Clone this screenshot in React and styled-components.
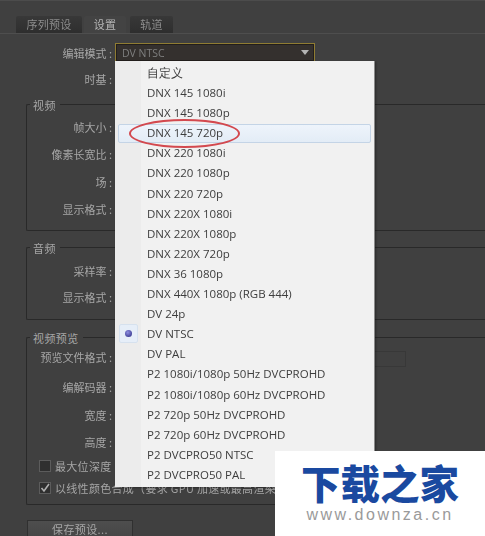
import React from 'react'
import styled, { createGlobalStyle } from 'styled-components'

const GlobalStyle = createGlobalStyle`
  html, body { margin: 0; padding: 0; background: #404040; }
  body { width: 485px; height: 536px; overflow: hidden; }
`

const Window = styled.div`
  position: relative;
  width: 485px;
  height: 536px;
  overflow: hidden;
  background: #404040;
  border-top: 1px solid #4c4c4c;
  box-sizing: border-box;
  font-family: "Noto Sans CJK SC", "Open Sans", sans-serif;
  color: #a6a6a6;
  font-size: 11px;
`

const Soft = styled.div`
  filter: blur(0.4px);
`

const TabBar = styled.div`
  display: flex;
  align-items: flex-end;
  height: 32px;
  padding-left: 16px;
  border-bottom: 1px solid #4e4e4e;
`

const Tab = styled.div`
  width: ${p => p.$w}px;
  height: 17px;
  line-height: 16px;
  margin-right: ${p => p.$gap || 0}px;
  text-align: center;
  letter-spacing: 0.3px;
  color: ${p => (p.$active ? '#b5b5b5' : '#8c8c8c')};
  background: ${p => (p.$active ? '#434343' : 'linear-gradient(#383838, #2e2e2e)')};
  border-radius: 2px 2px 0 0;
`

const Body = styled.div`
  padding: 9px 0 0 26px;
  width: 600px;
`

const FormRow = styled.div`
  display: flex;
  align-items: center;
  height: ${p => p.$h || 27}px;
`

const Label = styled.div`
  width: ${p => p.$w}px;
  text-align: right;
  flex: none;
  white-space: nowrap;
`

const SelectBox = styled.div`
  width: 200px;
  height: 19px;
  margin-left: 3px;
  box-sizing: border-box;
  display: flex;
  align-items: center;
  justify-content: space-between;
  background: #34302e;
  border: 1px solid #8f7c33;
  box-shadow: inset 0 0 0 1px #221e1c;
  padding: 0 5px 0 6px;
  font-family: "Open Sans", sans-serif;
  font-size: 10.5px;
  color: #7f7f7f;
`

const Arrow = styled.span`
  width: 0;
  height: 0;
  border-left: 4px solid transparent;
  border-right: 4px solid transparent;
  border-top: 5px solid #b4b4b4;
`

const Group = styled.div`
  border: 1px solid #292929;
  border-right: none;
  border-radius: 2px 0 0 2px;
  position: relative;
  height: ${p => p.$h}px;
  margin-top: ${p => p.$mt}px;
  box-sizing: border-box;
  padding-top: ${p => p.$pt}px;
`

const Legend = styled.div`
  position: absolute;
  top: -8px;
  left: 3px;
  padding: 0 4px 0 3px;
  height: 16px;
  line-height: 16px;
  background: #404040;
  letter-spacing: 0.4px;
`

const CheckRow = styled.div`
  display: flex;
  align-items: center;
  height: ${p => p.$h}px;
  padding-left: 12px;
  gap: 4px;
  letter-spacing: 0.3px;
  white-space: nowrap;
`

const CheckBox = styled.span`
  width: 10px;
  height: 10px;
  flex: none;
  background: #2f2f2f;
  border: 1px solid #5c5c5c;
  display: flex;
  align-items: center;
  justify-content: center;
`

const SaveButton = styled.div`
  width: 106px;
  height: 20px;
  margin: 15px 0 0 1px;
  box-sizing: border-box;
  background: linear-gradient(#4e4e4e, #454545);
  border: 1px solid #303030;
  text-align: center;
  line-height: 17px;
  letter-spacing: 0.4px;
`

const SmallField = styled.div`
  position: absolute;
  left: 374px;
  top: 350px;
  width: 30px;
  height: 14px;
  border: 1px solid #383838;
`

const Menu = styled.div`
  position: absolute;
  left: 115px;
  top: 60px;
  width: 260px;
  height: 426px;
  box-sizing: border-box;
  padding-top: 2px;
  background: linear-gradient(to right, #ececec 0, #ececec 26px, #f1f1f1 26px);
  border-right: 1px solid #8b8b8b;
  box-shadow: 1px 1px 2px rgba(0, 0, 0, 0.35);
  font-family: "Open Sans", sans-serif;
  font-size: 11.5px;
  color: #3d3d3d;
`

const MenuItem = styled.div`
  position: relative;
  height: 20.1px;
  line-height: 20px;
  padding-left: 32px;
  white-space: nowrap;
`

const Highlight = styled.div`
  position: absolute;
  left: 3px;
  right: 3px;
  top: 1px;
  bottom: 0;
  border: 1px solid #c4d4e6;
  border-radius: 2px;
  background: linear-gradient(#eef4fb, #e3ecf6);
`

const ItemText = styled.span`
  position: relative;
`

const RadioMark = styled.div`
  position: absolute;
  left: 4px;
  top: 0;
  width: 19px;
  height: 19px;
  box-sizing: border-box;
  background: #e6eef8;
  border: 1px solid #d6e1ee;
  border-radius: 2px;
  display: flex;
  align-items: center;
  justify-content: center;
  &::after {
    content: '';
    width: 7px;
    height: 7px;
    border-radius: 50%;
    background: radial-gradient(circle at 40% 35%, #8f8fe0, #26267e);
  }
`

const Ring = styled.div`
  position: absolute;
  left: 129px;
  top: 118px;
  width: 111px;
  height: 29px;
  box-sizing: border-box;
  border: 2px solid #d3494f;
  border-radius: 50%;
`

const Watermark = styled.div`
  position: absolute;
  right: 0;
  bottom: 0;
  width: 210px;
  height: 85px;
  background: #fff;
  display: flex;
  flex-direction: column;
  align-items: center;
`

const LogoText = styled.div`
  margin-top: 8px;
  font-family: "Noto Sans CJK SC", sans-serif;
  font-weight: 900;
  font-size: 39.5px;
  line-height: 46px;
  color: #1a49a0;
  white-space: nowrap;
`

const LogoUrl = styled.div`
  margin-top: 1px;
  font-family: "Liberation Sans", sans-serif;
  font-size: 16px;
  line-height: 18px;
  letter-spacing: 2.5px;
  color: #9a9a9a;
  white-space: nowrap;
`

const menuItems = [
  '自定义',
  'DNX 145 1080i',
  'DNX 145 1080p',
  'DNX 145 720p',
  'DNX 220 1080i',
  'DNX 220 1080p',
  'DNX 220 720p',
  'DNX 220X 1080i',
  'DNX 220X 1080p',
  'DNX 220X 720p',
  'DNX 36 1080p',
  'DNX 440X 1080p (RGB 444)',
  'DV 24p',
  'DV NTSC',
  'DV PAL',
  'P2 1080i/1080p 50Hz DVCPROHD',
  'P2 1080i/1080p 60Hz DVCPROHD',
  'P2 720p 50Hz DVCPROHD',
  'P2 720p 60Hz DVCPROHD',
  'P2 DVCPRO50 NTSC',
  'P2 DVCPRO50 PAL',
]

export default function App() {
  return (
    <>
      <GlobalStyle />
      <Window>
        <Soft>
          <TabBar>
            <Tab $w={66} $gap={2}>序列预设</Tab>
            <Tab $w={42} $gap={4} $active>设置</Tab>
            <Tab $w={43}>轨道</Tab>
          </TabBar>
          <Body>
            <FormRow $h={19}>
              <Label $w={86}>编辑模式 :</Label>
              <SelectBox>
                DV NTSC
                <Arrow />
              </SelectBox>
            </FormRow>
            <FormRow $h={33}>
              <Label $w={86}>时基 :</Label>
            </FormRow>
            <Group $h={127} $mt={9} $pt={8}>
              <Legend>视频</Legend>
              <FormRow><Label $w={85}>帧大小 :</Label></FormRow>
              <FormRow $h={28}><Label $w={85}>像素长宽比 :</Label></FormRow>
              <FormRow><Label $w={85}>场 :</Label></FormRow>
              <FormRow $h={28}><Label $w={85}>显示格式 :</Label></FormRow>
            </Group>
            <Group $h={73} $mt={16} $pt={10}>
              <Legend>音频</Legend>
              <FormRow $h={26}><Label $w={85}>采样率 :</Label></FormRow>
              <FormRow $h={26}><Label $w={85}>显示格式 :</Label></FormRow>
            </Group>
            <Group $h={168} $mt={17} $pt={4}>
              <Legend>视频预览</Legend>
              <FormRow $h={30}><Label $w={85}>预览文件格式 :</Label></FormRow>
              <FormRow $h={29}><Label $w={85}>编解码器 :</Label></FormRow>
              <FormRow><Label $w={85}>宽度 :</Label></FormRow>
              <FormRow><Label $w={85}>高度 :</Label></FormRow>
              <CheckRow $h={22}>
                <CheckBox />
                最大位深度
              </CheckRow>
              <CheckRow $h={22}>
                <CheckBox>
                  <svg width="10" height="10" viewBox="0 0 10 10">
                    <path d="M1.5 5 L4 8 L9 1" fill="none" stroke="#b0b0b0" strokeWidth="1.6" />
                  </svg>
                </CheckBox>
                以线性颜色合成（要求 GPU 加速或最高渲染品质）
              </CheckRow>
            </Group>
            <SaveButton>保存预设...</SaveButton>
          </Body>
          <SmallField />
          <Menu>
            {menuItems.map(item => (
              <MenuItem key={item}>
                {item === 'DNX 145 720p' && <Highlight />}
                {item === 'DV NTSC' && <RadioMark />}
                <ItemText>{item}</ItemText>
              </MenuItem>
            ))}
          </Menu>
        </Soft>
        <Ring />
        <Watermark>
          <LogoText>下载之家</LogoText>
          <LogoUrl>www.downza.cn</LogoUrl>
        </Watermark>
      </Window>
    </>
  )
}
